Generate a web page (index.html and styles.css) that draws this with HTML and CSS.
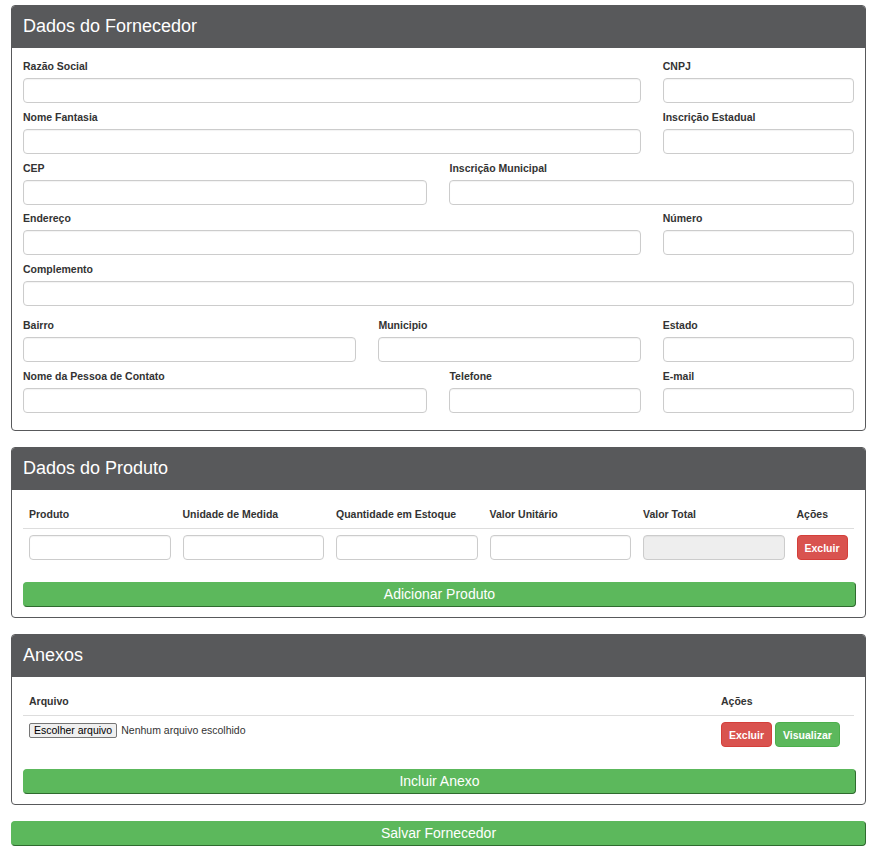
FILE: index.html
```html
<!DOCTYPE html>
<html lang="pt-BR">
<head>
<meta charset="utf-8">
<title>Cadastro de Fornecedor</title>
<link rel="stylesheet" href="styles.css">
</head>
<body>
<div class="page">
  <section class="panel">
    <div class="panel-heading">Dados do Fornecedor</div>
    <div class="panel-body form-grid">
      <div class="field span-9"><label>Razão Social</label><input class="control" type="text"></div>
      <div class="field span-3"><label>CNPJ</label><input class="control" type="text"></div>
      <div class="field span-9"><label>Nome Fantasia</label><input class="control" type="text"></div>
      <div class="field span-3"><label>Inscrição Estadual</label><input class="control" type="text"></div>
      <div class="field span-6"><label>CEP</label><input class="control" type="text"></div>
      <div class="field span-6"><label>Inscrição Municipal</label><input class="control" type="text"></div>
      <div class="field span-9"><label>Endereço</label><input class="control" type="text"></div>
      <div class="field span-3"><label>Número</label><input class="control" type="text"></div>
      <div class="field span-12 field-wide-gap"><label>Complemento</label><input class="control" type="text"></div>
      <div class="field span-5"><label>Bairro</label><input class="control" type="text"></div>
      <div class="field span-4"><label>Municipio</label><input class="control" type="text"></div>
      <div class="field span-3"><label>Estado</label><input class="control" type="text"></div>
      <div class="field span-6"><label>Nome da Pessoa de Contato</label><input class="control" type="text"></div>
      <div class="field span-3"><label>Telefone</label><input class="control" type="text"></div>
      <div class="field span-3"><label>E-mail</label><input class="control" type="text"></div>
    </div>
  </section>

  <section class="panel">
    <div class="panel-heading">Dados do Produto</div>
    <div class="panel-body">
      <table class="data-table products">
        <thead>
          <tr>
            <th class="col-prod">Produto</th>
            <th class="col-prod">Unidade de Medida</th>
            <th class="col-prod">Quantidade em Estoque</th>
            <th class="col-prod">Valor Unitário</th>
            <th class="col-prod">Valor Total</th>
            <th>Ações</th>
          </tr>
        </thead>
        <tbody>
          <tr>
            <td><input class="control" type="text"></td>
            <td><input class="control" type="text"></td>
            <td><input class="control" type="text"></td>
            <td><input class="control" type="text"></td>
            <td><input class="control" type="text" disabled></td>
            <td><button class="btn btn-danger" type="button">Excluir</button></td>
          </tr>
        </tbody>
      </table>
      <button class="btn-block" type="button">Adicionar Produto</button>
    </div>
  </section>

  <section class="panel">
    <div class="panel-heading">Anexos</div>
    <div class="panel-body">
      <table class="data-table attachments">
        <thead>
          <tr>
            <th class="col-file">Arquivo</th>
            <th>Ações</th>
          </tr>
        </thead>
        <tbody>
          <tr>
            <td>
              <div class="file-input">
                <span class="file-btn">Escolher arquivo</span>
                <span class="file-name">Nenhum arquivo escolhido</span>
              </div>
            </td>
            <td>
              <div class="actions">
                <button class="btn btn-danger" type="button">Excluir</button>
                <button class="btn btn-success" type="button">Visualizar</button>
              </div>
            </td>
          </tr>
        </tbody>
      </table>
      <button class="btn-block" type="button">Incluir Anexo</button>
    </div>
  </section>

  <button class="btn-block btn-save" type="button">Salvar Fornecedor</button>
</div>
</body>
</html>
```

FILE: styles.css
```css
* {
  box-sizing: border-box;
}

html, body {
  margin: 0;
  padding: 0;
  background: #ffffff;
}

body {
  font-family: "Liberation Sans", Arial, Helvetica, sans-serif;
  color: #333333;
  font-size: 12px;
}

.page {
  width: 855px;
  margin: 0 0 0 11px;
  padding: 5px 0 16px;
  display: flex;
  flex-direction: column;
  gap: 16px;
}

.panel {
  border: 1px solid #58595b;
  border-radius: 4px;
  background: #ffffff;
  overflow: hidden;
}

.panel-heading {
  background: #58595b;
  color: #ffffff;
  font-size: 18px;
  height: 42px;
  line-height: 41px;
  padding: 0 11px;
}

.panel-body {
  padding: 10px 11px 10px;
}

/* Supplier form grid */
.form-grid {
  display: grid;
  grid-template-columns: repeat(12, 1fr);
  column-gap: 22px;
  padding-top: 11px;
  padding-bottom: 11px;
}

.field {
  display: flex;
  flex-direction: column;
  margin-bottom: 6.75px;
}

.field-wide-gap {
  margin-bottom: 11.75px;
}

.field label {
  font-size: 10.5px;
  font-weight: bold;
  line-height: 15px;
  margin-bottom: 4px;
  color: #333333;
}

.span-3 { grid-column: span 3; }
.span-4 { grid-column: span 4; }
.span-5 { grid-column: span 5; }
.span-6 { grid-column: span 6; }
.span-9 { grid-column: span 9; }
.span-12 { grid-column: span 12; }

.control {
  display: block;
  width: 100%;
  height: 25px;
  border: 1px solid #cccccc;
  border-radius: 4px;
  background: #ffffff;
  padding: 2px 6px;
  font-family: inherit;
  font-size: 12px;
  box-shadow: inset 0 1px 1px rgba(0, 0, 0, 0.05);
}

.control:disabled {
  background: #eeeeee;
}

/* Tables */
.data-table {
  width: 100%;
  border-collapse: collapse;
  table-layout: fixed;
}

.data-table th {
  text-align: left;
  font-size: 10.5px;
  font-weight: bold;
  line-height: 14px;
  padding: 7px 6px 7px;
  border-bottom: 1px solid #dddddd;
  color: #333333;
}

.data-table td {
  padding: 6px 6px 6px;
  vertical-align: top;
}

.products .col-prod {
  width: 153.5px;
}

.attachments .col-file {
  width: 692px;
}

.btn {
  height: 25px;
  padding: 0 7px;
  font-family: inherit;
  font-size: 10.5px;
  font-weight: bold;
  color: #ffffff;
  border-radius: 4px;
  border: 1px solid transparent;
  cursor: pointer;
}

.btn-danger {
  background: #d9534f;
  border-color: #d43f3a;
}

.btn-success {
  background: #5cb85c;
  border-color: #4cae4c;
}

.actions {
  display: flex;
  gap: 3px;
}

.file-input {
  display: flex;
  align-items: center;
  gap: 4px;
  margin-top: 1px;
  font-size: 10.5px;
  line-height: 13px;
}

.file-btn {
  display: inline-block;
  padding: 0 4px;
  border: 1px solid #767676;
  border-radius: 2px;
  background: #efefef;
  color: #000000;
}

.file-name {
  color: #333333;
}

.btn-block {
  display: block;
  width: calc(100% + 2px);
  height: 25px;
  margin-top: 16px;
  padding: 0 0 2px;
  background: #5cb85c;
  color: #ffffff;
  font-family: inherit;
  font-size: 14px;
  border: 1px solid #5cb85c;
  border-right-color: #2f6b2f;
  border-bottom-color: #2f6b2f;
  border-radius: 4px;
  cursor: pointer;
}

.btn-save {
  width: 100%;
  margin-top: 0;
}
```
